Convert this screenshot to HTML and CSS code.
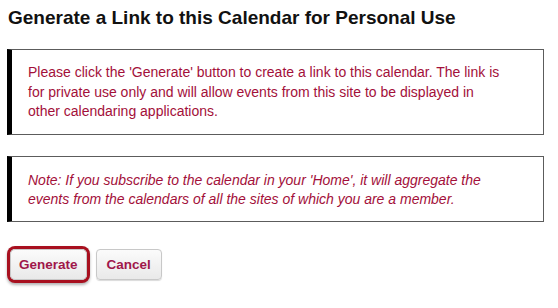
FILE: index.html
```html
<!DOCTYPE html>
<html>
<head>
<meta charset="utf-8">
<link rel="stylesheet" href="styles.css">
</head>
<body>
<div class="page">
  <h1 class="title">Generate a Link to this Calendar for Personal Use</h1>
  <div class="msg">Please click the 'Generate' button to create a link to this calendar. The link is for private use only and will allow events from this site to be displayed in other calendaring applications.</div>
  <div class="msg note">Note: If you subscribe to the calendar in your 'Home', it will aggregate the events from the calendars of all the sites of which you are a member.</div>
  <div class="actions">
    <button class="btn btn-hl">Generate</button>
    <button class="btn">Cancel</button>
  </div>
</div>
</body>
</html>
```
FILE: styles.css
```css
html, body { margin: 0; padding: 0; background: #fff; }
body { font-family: "Liberation Sans", Arial, sans-serif; }
.page { width: 558px; height: 308px; padding: 0 14px 0 7px; box-sizing: border-box; }
.title { margin: 0; padding: 7px 0 0 1px; font-size: 19px; line-height: 22px; font-weight: bold; color: #111; }
.msg {
  margin-top: 20px;
  border: 1px solid #5c5c5c;
  border-left: 5px solid #000;
  padding: 13px 36px 12px 16px;
  font-size: 14px;
  line-height: 19.5px;
  color: #a3103a;
}
.note { font-style: italic; margin-top: 21px; padding: 14px 36px 12px 16px; line-height: 19px; }
.actions { display: flex; gap: 9px; margin-top: 27px; padding-left: 3px; }
.btn {
  font-family: "Liberation Sans", Arial, sans-serif;
  font-size: 13.5px; font-weight: bold; color: #a0174a;
  height: 31px; padding: 0 10px;
  border: 1px solid #c8c8c8; border-radius: 4px;
  background: linear-gradient(#fbfbfb, #e9e9e9);
  box-shadow: 0 1px 1px rgba(0,0,0,0.15);
}
.btn-hl { padding: 0 8px; box-shadow: 0 0 0 3px #a8101f, 0 2px 3px 3px rgba(0,0,0,0.3); border-radius: 5px; }
```
